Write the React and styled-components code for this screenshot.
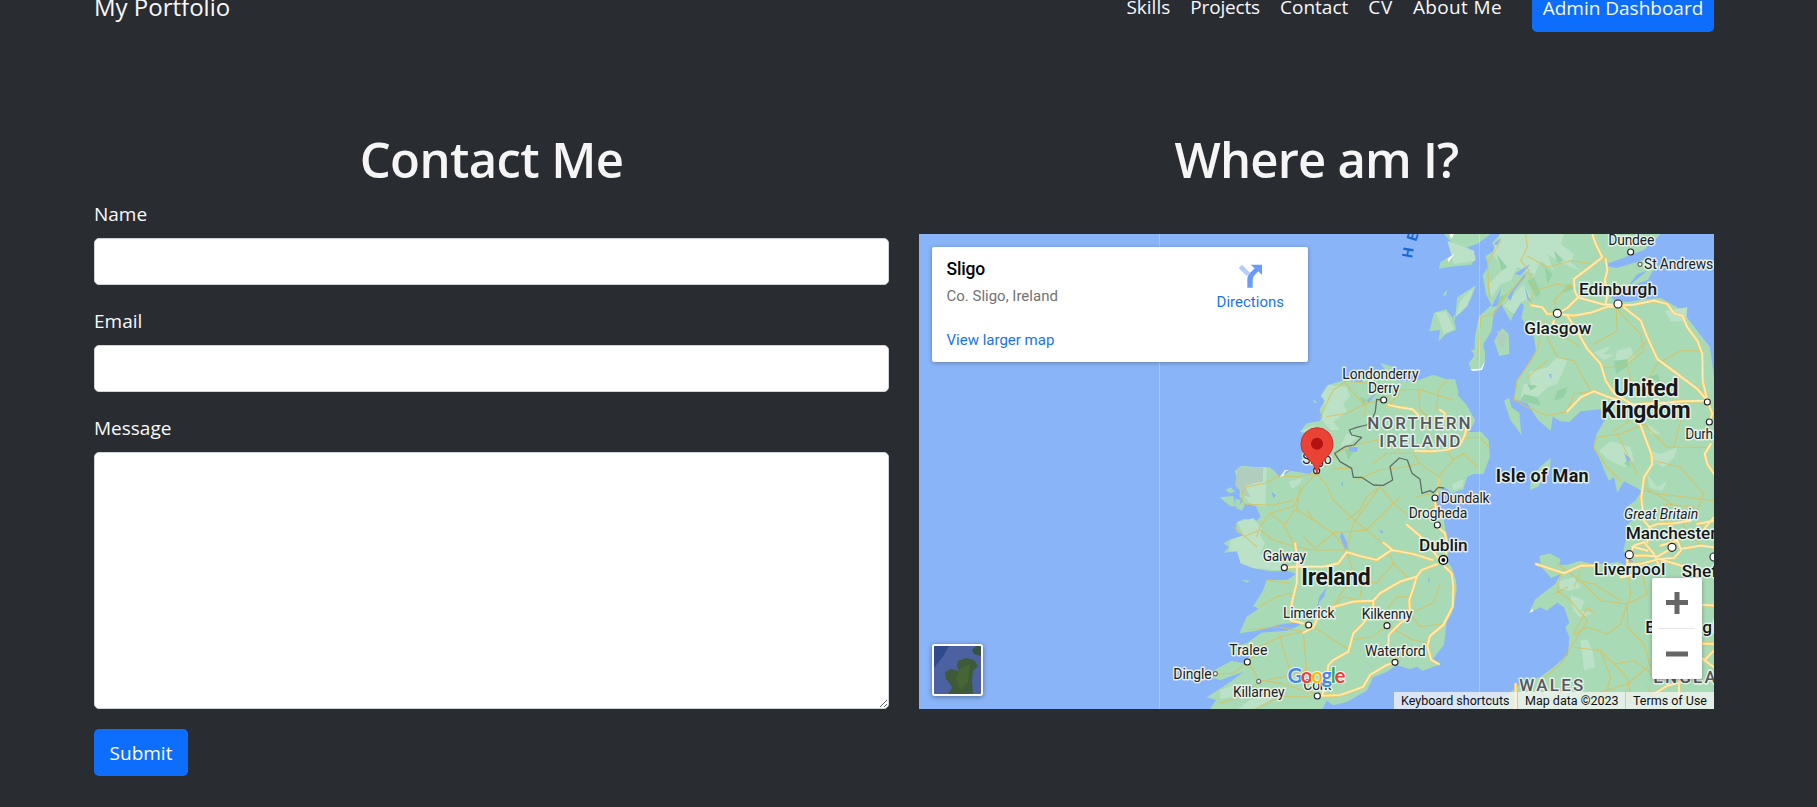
import React from "react";
import styled, { createGlobalStyle } from "styled-components";

const GlobalStyle = createGlobalStyle`
  * { box-sizing: border-box; }
  body {
    margin: 0;
    height: 807px;
    overflow: hidden;
    background: #292c31;
    color: #f8f9fa;
    font-family: "Open Sans", "Noto Sans", sans-serif;
    font-size: 19px;
    line-height: 30px;
  }
`;

const Page = styled.div`
  width: 1620px;
  margin-left: 94px;
`;

const Nav = styled.nav`
  display: flex;
  align-items: center;
  height: 47px;
  margin-top: -15px;
`;

const Brand = styled.a`
  font-size: 24px;
  margin: -4px auto 0 0;
`;

const NavLink = styled.a`
  padding: 0 10px;
  margin-top: -4px;
  letter-spacing: ${(p) => p.$spacing || 0}px;
`;

const AdminButton = styled.a`
  display: flex;
  align-items: center;
  justify-content: center;
  width: 182px;
  height: 47px;
  margin-left: 20px;
  padding-bottom: 2px;
  border-radius: 5px;
  background: #0d6efd;
`;

const Columns = styled.main`
  display: grid;
  grid-template-columns: 795px 795px;
  column-gap: 30px;
  padding-top: 98px;
`;

const Title = styled.h1`
  margin: 0;
  height: 60px;
  line-height: 59px;
  text-align: center;
  font-size: 49px;
  font-weight: 600;
  letter-spacing: ${(p) => p.$spacing}px;
  color: #f5f5f5;
`;

const Form = styled.form`
  display: flex;
  flex-direction: column;
  align-items: flex-start;
  padding-top: 8px;
`;

const Label = styled.label`
  height: 31px;
  line-height: 32px;
  margin-bottom: 9px;
`;

const Input = styled.input`
  width: 100%;
  height: 47px;
  margin-bottom: 20px;
  border: 1px solid #ced4da;
  border-radius: 5px;
  background: #fff;
`;

const TextArea = styled.textarea`
  width: 100%;
  height: 257px;
  margin-bottom: 20px;
  border: 1px solid #ced4da;
  border-radius: 5px;
  background: #fff;
`;

const Submit = styled.button`
  width: 94px;
  height: 47px;
  padding: 1px 0 0;
  border: 0;
  border-radius: 5px;
  background: #0d6efd;
  color: #fff;
  font: inherit;
`;

const MapFrame = styled.section`
  position: relative;
  height: 475px;
  margin-top: 44px;
  overflow: hidden;
  background: #8ab4f8;
  font-family: Roboto, sans-serif;
`;

const Chart = styled.svg`
  display: block;
`;

const PlaceCard = styled.div`
  position: absolute;
  left: 13px;
  top: 13px;
  width: 376px;
  height: 115px;
  padding: 10px 24px 0 14.5px;
  display: flex;
  justify-content: space-between;
  border-radius: 2px;
  background: #fff;
  box-shadow: 0 1px 4px rgba(0, 0, 0, 0.3);
`;

const PlaceName = styled.div`
  font-size: 17.5px;
  font-weight: 500;
  line-height: 24px;
  letter-spacing: -0.2px;
  color: #000;
`;

const PlaceAddress = styled.div`
  margin-top: 5px;
  font-size: 15px;
  line-height: 20px;
  color: #737373;
`;

const CardLink = styled.a`
  display: block;
  margin-top: ${(p) => p.$gap}px;
  font-size: 15px;
  line-height: 20px;
  color: #1a73e8;
`;

const Directions = styled.div`
  display: flex;
  flex-direction: column;
  align-items: center;
  padding-top: 6px;
`;

const Thumb = styled.div`
  position: absolute;
  left: 13px;
  top: 410px;
  width: 51px;
  height: 52px;
  border: 2px solid #fff;
  border-radius: 3px;
  overflow: hidden;
  box-shadow: 0 1px 5px rgba(0, 0, 0, 0.4);
`;

const ZoomBox = styled.div`
  position: absolute;
  left: 733px;
  top: 344px;
  width: 50px;
  height: 101px;
  border-radius: 2px;
  background: #fff;
  box-shadow: 0 1px 4px rgba(0, 0, 0, 0.3);
`;

const Terms = styled.div`
  position: absolute;
  right: 0;
  bottom: 0;
  display: flex;
  height: 17px;
  font-size: 12.5px;
  line-height: 17px;
  color: #111;
`;

const Term = styled.span`
  width: ${(p) => p.$width}px;
  padding-left: 7px;
  margin-left: ${(p) => (p.$first ? 0 : 1)}px;
  background: rgba(245, 245, 245, 0.74);
  white-space: nowrap;
`;

/* Coordinates below are in thirds of a pixel, in two sheets: west (Ireland) and east (Great Britain). */
const WEST = "translate(281 116) scale(0.33333)";
const EAST = "translate(495 0) scale(0.33333)";

const ireland =
  "M440,88 L405,98 382,106 362,138 374,152 358,180 366,200 358,214 320,220 300,246 330,252 342,262 346,352 330,372 272,362 240,382 226,366 210,352 165,352 125,347 104,362 110,385 122,402 118,440 130,452 108,474 126,482 136,462 168,468 182,500 170,512 130,506 108,520 110,545 130,556 92,568 70,580 86,590 72,608 110,604 122,640 160,655 210,664 262,662 288,672 262,690 200,690 188,724 160,768 176,776 140,800 118,850 170,842 236,824 296,816 300,826 262,842 184,848 140,880 90,892 94,915 150,918 128,940 95,932 40,962 0,976 62,990 130,965 92,995 20,1042 48,1050 28,1080 366,1080 380,1052 400,1066 440,1056 500,1022 520,982 560,966 590,945 630,958 650,950 668,962 718,944 700,925 732,884 740,815 756,790 770,720 768,690 754,650 738,628 748,602 740,560 732,512 704,475 706,440 735,412 756,430 790,418 802,380 822,372 850,372 870,320 866,270 844,246 806,246 826,212 800,165 772,134 776,128 765,88 740,88 700,74 650,92 590,92 604,78 578,50 540,38 556,60 520,76 490,80 486,98 Z";

const britain =
  "M258,0 L234,28 246,48 214,66 224,96 206,124 216,180 232,214 196,246 184,300 180,370 164,388 174,409 200,405 214,380 208,330 232,292 240,232 262,210 270,226 290,262 302,230 296,190 330,214 322,252 360,310 366,350 342,392 308,440 300,495 340,508 372,558 410,590 416,548 440,562 466,564 500,532 560,526 574,556 548,600 538,640 556,672 584,740 600,730 610,776 630,742 650,752 684,770 664,800 636,820 664,850 640,872 640,900 628,950 660,1006 612,984 540,992 500,980 460,992 436,992 440,976 408,958 376,966 382,1000 412,1032 440,1020 424,1050 384,1080 364,1096 346,1136 380,1120 398,1130 430,1106 450,1120 466,1166 454,1180 466,1210 462,1262 420,1298 380,1328 320,1350 270,1390 200,1428 L900,1428 900,430 888,340 862,306 800,226 740,192 700,194 640,204 600,200 590,184 640,160 702,138 716,112 740,98 700,74 608,102 568,94 690,48 740,0 Z";

const islands =
  "M120,60 L130,44 90,0 230,0 190,30 160,40 186,70 172,92 110,98 74,104 80,84Z M186,154 L170,196 140,236 118,246 126,288 96,300 74,322 78,288 46,292 60,236 96,226 122,260 130,190Z M264,282 L284,300 286,360 256,366 240,320Z M410,672 L408,706 372,758 348,768 350,744 376,700Z M270,500 L286,492 292,520 316,536 322,604 306,580 290,560Z M100,166 L96,186 86,184Z";

const westHills =
  "M386,105 L440,110 450,140 430,160 440,185 400,215 420,240 392,240 366,212 374,152 364,136Z M120,350 L200,352 196,470 150,460 125,430 150,440 110,400Z M112,515 L160,505 185,535 180,555 195,580 180,610 200,625 246,636 250,662 160,654 122,640 112,604 88,604 90,572 130,556Z M265,395 L306,384 300,400 276,416Z M756,402 L790,388 788,410 762,420Z M150,1050 L210,1030 220,1045 170,1075 110,1080Z M60,1020 L120,1000 104,1040 60,1046Z M300,244 L345,225 345,248Z M440,250 L475,260 450,280 420,292Z";
const eastHills =
  "M258,0 L450,0 440,30 480,60 470,86 500,110 450,90 400,60 420,110 380,80 350,150 360,120 310,100 290,140 260,150 232,190 224,150 262,112 250,80 234,60Z M100,20 L180,50 184,80 120,90Z M140,200 L180,160 160,216 124,250Z M66,236 L96,234 120,286 90,300Z M270,215 L300,180 330,150 350,190 322,205 300,240Z M345,414 L400,400 430,368 460,380 430,450 400,460 360,500 320,486 330,450 350,450Z M540,355 L590,335 570,360 600,362 570,380Z M610,350 L650,338 660,370 630,400 600,388Z M752,230 L820,220 816,262 770,262Z M556,650 L590,620 650,640 660,680 630,700 580,676Z M710,650 L740,660 790,640 780,670 750,700 720,684Z M432,1042 L480,1030 500,1060 470,1070 440,1066Z M470,1084 L512,1100 500,1130 540,1136 500,1152 478,1130Z M498,1220 L520,1216 536,1250 544,1300 510,1310 506,1270Z M700,720 L730,760 760,740 744,772 706,760Z M700,570 L740,600 710,600Z";
const greyHills =
  "M115,352 L190,352 188,395 160,400 134,408 152,442 130,436 105,405Z";
const darkHills =
  "M600,380 L640,376 642,396 606,420Z M330,480 L370,490 380,515 320,500Z M340,450 L370,456 350,470Z M700,430 L730,420 740,444Z M430,470 L460,460 450,490 420,500Z M360,130 L380,180 366,190 340,140Z M248,60 L280,100 262,110Z M392,100 L416,120 400,150Z M250,190 L280,180 250,220Z M630,690 L646,670 650,700Z M420,50 L450,80 430,86Z M460,150 L490,160 440,180Z";

const westMinor =
  "M350,371 L380,405 400,450 440,490 500,540 560,590 M350,371 L310,410 280,470 210,490 M350,371 L290,380 235,378 196,400 140,410 125,430 M125,430 L130,462 220,466 280,450 M210,490 L250,520 285,590 M300,410 L290,480 340,510 400,550 440,600 M285,480 L250,530 M340,510 L320,480 M400,354 L450,356 M374,352 L410,310 460,285 530,270 600,300 M362,200 L380,160 400,120 440,94 500,100 M380,200 L440,190 500,160 548,150 M430,90 L470,140 500,165 490,200 M548,150 L600,120 655,118 760,150 M655,118 L660,180 700,210 M710,180 L715,120 740,90 M560,170 L600,130 M540,410 L500,440 480,480 440,510 M540,410 L580,460 630,500 700,470 M470,390 L540,360 620,350 660,340 M600,440 L500,540 400,548 M285,590 L220,570 180,540 130,560 M285,590 L340,600 400,550 M440,600 L460,520 540,410 M440,600 L460,670 430,720 400,770 M560,590 L580,640 620,680 M440,600 L350,600 310,560 M200,690 L270,700 M180,770 L230,740 275,730 M310,845 L320,960 M310,845 L230,830 150,840 M310,845 L240,860 180,890 145,935 175,990 M145,935 L100,970 50,972 M175,990 L240,1000 340,1030 M340,830 L400,870 450,900 M320,960 L250,980 180,995 120,1040 60,1060 M560,826 L520,860 450,870 M560,826 L520,760 M560,826 L640,870 690,880 M640,740 L590,740 560,780 M720,700 L700,760 630,790 660,830 740,820 M400,770 L430,740 520,760 M585,930 L620,900 690,885 M715,380 L660,340 640,310 560,310 520,340 M715,380 L760,330 790,310 830,350 M790,265 L840,262 866,290 M760,330 L740,300 M240,860 L280,1000 M170,1075 L240,1040 330,1040 M580,640 L530,700 490,690 480,740 M210,490 L180,530 170,560 M100,530 L170,590 M650,440 L700,430";
const eastMinor =
  "M335,0 L340,40 320,80 345,110 310,150 280,180 240,240 200,250 190,380 M340,66 L400,100 470,80 540,90 570,70 M345,110 L360,170 350,200 M260,20 L220,90 226,190 M360,170 L430,150 480,160 M430,240 L420,200 470,150 M380,290 L370,350 310,440 300,500 M380,290 L440,300 500,340 M390,260 L400,310 430,370 480,380 530,470 M606,220 L610,290 540,330 M680,300 L640,260 606,220 M700,320 L620,400 570,400 M680,300 L690,350 640,390 650,440 M730,390 L800,350 866,350 M730,390 L700,440 640,480 M300,495 L340,520 400,545 460,532 M460,532 L480,480 540,470 M400,380 L340,430 M690,570 L620,600 550,610 540,640 580,700 620,740 M690,570 L760,640 880,640 M610,600 L640,660 670,720 M720,680 L800,700 870,780 840,850 M690,760 L760,800 820,850 M690,770 L740,780 900,800 M650,560 L600,590 M780,640 L800,560 M800,850 L820,900 860,930 M700,860 L760,810 840,820 M440,1020 L430,1070 470,1100 520,1160 M430,990 L500,1040 540,1050 620,1100 M500,1040 L560,1100 640,1110 700,1080 M640,1110 L640,1180 690,1230 710,1300 M640,1010 L650,1080 620,1170 580,1200 520,1180 480,1200 M520,1160 L470,1240 440,1290 380,1340 M480,1240 L560,1250 600,1290 660,1280 740,1340 M560,1250 L590,1330 560,1428 M600,1290 L640,1330 650,1400 M460,1060 L420,1080 M700,1080 L680,1000 M480,1060 L500,1010 M700,1300 L640,1350 540,1380 M380,1428 L440,1370 500,1360 M480,1200 L520,1120 540,1140 M740,1428 L700,1360";
const westMajor =
  "M565,165 L600,172 638,178 655,195 M720,180 L735,190 728,215 M645,302 L690,304 740,300 780,285 795,255 800,225 M705,455 L712,430 M708,500 L706,460 M712,530 L735,550 740,575 738,610 M620,524 L660,558 690,590 715,625 M250,652 L300,650 370,650 415,640 440,606 480,618 530,630 575,600 640,612 698,630 M550,578 L580,602 M285,580 L292,620 290,700 275,760 272,812 M390,774 L460,755 520,752 540,730 600,695 650,680 665,660 712,642 M650,680 L640,715 628,750 630,800 600,820 566,855 565,890 584,925 M520,752 L520,780 488,822 460,850 445,905 400,930 385,945 M355,800 L340,832 310,848 M310,820 L275,812 M734,650 L755,670 760,710 758,770 730,825 690,858 682,890 694,930 716,942 M360,1038 L420,1035 450,1025 490,1010 510,975 560,945 585,938 M385,945 L380,1000 366,1036";
const eastMajor =
  "M535,0 L545,30 565,70 520,105 480,135 482,170 492,190 M575,75 L580,110 572,140 580,180 575,210 M492,190 L570,212 612,212 M430,240 L462,220 492,190 M430,240 L480,245 530,236 580,218 612,218 M612,215 L660,212 720,200 760,210 780,238 805,245 820,280 850,320 865,360 866,440 880,500 M630,220 L680,260 700,310 730,375 790,420 850,465 880,500 M352,214 L385,220 400,240 430,240 M412,285 L420,260 M460,245 L500,310 520,345 560,390 575,440 600,478 660,515 M460,532 L500,490 540,472 580,488 620,500 M640,512 L760,506 800,502 880,500 M660,515 L680,575 712,660 715,690 690,730 682,790 690,860 706,880 M880,500 L895,540 885,565 M890,630 L872,660 880,690 900,720 M366,990 L450,1018 500,995 540,995 M646,965 L700,965 730,968 774,942 M646,965 L660,935 690,925 720,960 735,995 M655,938 L700,950 M706,880 L730,870 780,868 830,860 M706,880 L700,925 M640,965 L640,990 680,990 735,975 780,972 800,950 M740,935 L790,920 800,945 860,935 900,940 M820,1000 L735,975 M850,870 L900,860 M870,885 L900,850 M850,1112 L900,1114 M850,1228 L900,1230 M860,1270 L900,1300 M900,1250 L870,1280 M720,1380 L760,1355 800,1345 M795,1340 L795,1390 770,1428 M305,1350 L305,1428 M620,1030 L650,1024";
const border =
  "M548,150 L530,148 526,185 515,210 500,225 470,232 448,240 455,255 485,262 462,285 435,290 404,310 420,335 455,355 460,382 485,382 520,405 550,406 578,390 570,350 598,324 622,330 636,370 660,388 666,430 690,422 700,428 715,412 732,414";

const westDots = [
  [551, 150], [350, 362], [705, 444], [712, 525], [253, 653], [326, 825],
  [561, 827], [142, 936], [585, 937], [352, 1038], [176, 994, 6], [46, 971, 6],
];
const eastDots = [
  [650, 54], [678, 91, 6], [612, 210, 12], [430, 238, 12], [880, 504], [886, 564],
  [646, 962, 12], [774, 940, 12], [900, 969, 12],
];

const town = { size: 14, weight: 400, color: "#202124" };
const city = { size: 17.3, weight: 500, color: "#16181b" };
const country = { size: 23, weight: 700, color: "#16181b" };
const region = { size: 17, weight: 500, color: "#56585d" };

const westLabels = [
  ["Londonderry", 427, 88, 229, town],
  ["Derry", 504, 129, 94, town],
  ["Sligo", 307, 342, 88, town],
  ["Dundalk", 722, 459, 147, town],
  ["Drogheda", 626, 504, 176, town],
  ["Galway", 188, 633, 130, town],
  ["Limerick", 249, 804, 155, town],
  ["Kilkenny", 485, 807, 152, town],
  ["Tralee", 88, 915, 114, town],
  ["Waterford", 495, 918, 182, town],
  ["Dingle", -80, 986, 115, town],
  ["Killarney", 99, 1041, 155, town],
  ["Cork", 310, 1019, 84, town],
  ["Dublin", 657, 602, 146, city],
  ["Ireland", 304, 704, 208, country],
  ["NORTHERN", 502, 237, 310, region],
  ["IRELAND", 538, 290, 243, region],
];
const eastLabels = [
  ["Dundee", 583, 33, 138, town],
  ["St Andrews", 690, 106, 208, town],
  ["Durham", 814, 615, 141, town],
  ["Edinburgh", 495, 183, 234, city],
  ["Glasgow", 331, 299, 201, city],
  ["Isle of Man", 245, 743, 279, { size: 18, weight: 700, color: "#16181b" }],
  ["Liverpool", 540, 1022, 214, city],
  ["Manchester", 635, 915, 272, city],
  ["Sheffield", 803, 1029, 206, city],
  ["Birmingham", 694, 1197, 312, city],
  ["Great Britain", 630, 854, 223, { ...town, italic: true }],
  ["United", 599, 486, 194, country],
  ["Kingdom", 562, 553, 268, country],
  ["WALES", 316, 1371, 192, region],
  ["ENGLAND", 718, 1346, 270, region],
];

function Labels({ items, left, top }) {
  return items.map(([text, x, y, width, kind]) => (
    <text
      key={text}
      x={left + x / 3}
      y={top + y / 3}
      textLength={width / 3}
      fontSize={kind.size}
      fontWeight={kind.weight}
      fontStyle={kind.italic ? "italic" : "normal"}
      fill={kind.color}
      stroke="#eef7f2"
      strokeOpacity="0.9"
      strokeWidth="2.8"
      strokeLinejoin="round"
      paintOrder="stroke"
    >
      {text}
    </text>
  ));
}

function Roads({ minor, major }) {
  return (
    <g fill="none" strokeLinejoin="round" strokeLinecap="round">
      <path d={minor} stroke="#dcc05c" strokeOpacity="0.85" strokeWidth="3.2" />
      <path d={major} stroke="#f7cb66" strokeWidth="9" />
      <path d={major} stroke="#ffecb8" strokeWidth="5" />
    </g>
  );
}

function Dots({ items }) {
  return items.map(([x, y, r = 9]) => (
    <circle key={`${x}-${y}`} cx={x} cy={y} r={r} fill="#fff" stroke={r === 6 ? "#666" : "#222"} strokeWidth={3.4} />
  ));
}

function MapDrawing() {
  return (
    <Chart width="795" height="475" viewBox="0 0 795 475">
      <g transform={WEST}>
        <path d={ireland} fill="#a8dab5" />
        <path d="M76,420 L92,412 106,425 90,430Z M58,442 L100,438 106,470 90,468Z M106,446 L122,450 116,474 106,468Z M340,146 L350,158 342,158Z M125,690 L150,692 140,698Z M812,0 L856,0 850,50 812,58 808,36 825,16Z" fill="#a8dab5" />
        <path d={westHills} fill="#bbe2c6" />
        <path d={greyHills} fill="#b0cdbd" />
        <path d="M435,300 L470,290 445,330Z M480,140 L500,150 490,170Z" fill="#94d2a5" />
        <path d="M446,290 L474,292 470,306 448,304Z M426,545 L440,575 446,600 434,596 420,560Z M380,712 L372,740 356,758 362,780 350,776 358,740Z M214,425 L228,436 220,445Z M424,396 L430,400 426,412Z M536,538 L550,545 546,552Z M684,688 L690,680 686,700Z M500,150 L530,130 505,160Z" fill="#8ab4f8" />
        <Roads minor={westMinor} major={westMajor} />
        <path d="M715,420 L716,385" fill="none" stroke="#f7cb66" strokeWidth="6" />
        <path d={border} fill="none" stroke="#5f6d68" strokeWidth="3.8" strokeLinejoin="round" />
        <path d="M240,380 L255,360 268,360 256,364 250,378Z" fill="#fff" />
      </g>
      <g transform={EAST}>
        <path d={britain} fill="#a8dab5" />
        <path d={islands} fill="#a8dab5" />
        <path d={eastHills} fill="#bbe2c6" />
        <path d={darkHills} fill="#94d2a5" />
        <path d="M250,290 L274,300 270,342 252,330Z" fill="#b0cdbd" />
        <path d="M280,190 L330,120 336,126 300,170 290,200Z M232,220 L262,160 250,216Z M330,150 L344,190 354,208 340,196Z M240,30 L262,10 250,34Z M404,420 L412,420 412,436Z M630,656 L650,676 640,684Z M640,160 L700,110 670,120Z M300,120 L350,90 320,124Z M640,966 L660,985 640,990Z" fill="#8ab4f8" />
        <path d="M100,75 L122,58 104,84Z M170,406 L200,404 214,380 204,408 176,411Z M346,1136 L354,1124 358,1132Z M106,0 L120,0 112,14Z" fill="#fff" />
        <Roads minor={eastMinor} major={eastMajor} />
      </g>
      <path d="M240.5,0V475M560.5,0V475" stroke="#fff" strokeOpacity="0.25" />
      <g transform={WEST}><Dots items={westDots} /></g>
      <g transform={EAST}><Dots items={eastDots} /></g>
      <g transform={WEST}>
        <circle cx="730" cy="630" r="13" fill="#fff" stroke="#000" strokeWidth="4" />
        <circle cx="730" cy="630" r="6" fill="#000" />
      </g>
      <Labels items={westLabels} left={281} top={116} />
      <Labels items={eastLabels} left={495} top={0} />
      <g fill="#1967d2" fontSize="14.5" fontWeight="700">
        <text transform="translate(493 24.5) rotate(-80)">H</text>
        <text transform="translate(497 8) rotate(-72)">E</text>
      </g>
      <g transform={WEST}>
        <path d="M351,372 C346,346 332,335 316,315 C306,303 303,294 303,281 A48,48 0 0 1 399,281 C399,294 396,303 386,315 C370,335 356,346 351,372Z" fill="#ea4335" stroke="#c5221f" strokeWidth="2.5" />
        <circle cx="351" cy="281" r="18" fill="#b31412" />
      </g>
      <text x="368.5" y="448.5" textLength="58" fontFamily="Lato, sans-serif" fontSize="20.5" fontWeight="700" stroke="#fff" strokeOpacity="0.8" strokeWidth="2" paintOrder="stroke">
        <tspan fill="#4285f4">G</tspan><tspan fill="#ea4335">o</tspan><tspan fill="#fbbc04">o</tspan><tspan fill="#4285f4">g</tspan><tspan fill="#34a853">l</tspan><tspan fill="#ea4335">e</tspan>
      </text>
    </Chart>
  );
}

function DirectionsIcon() {
  return (
    <svg width="25" height="26" viewBox="986 112 75 78">
      <path d="M998,117 L988,127 1012,151 1022,141Z" fill="#b3cdfd" />
      <path d="M1024,117 L1058,117 1058,148 1047,137 1036,148 Q1030,154 1030,162 L1030,186 1014,186 1014,160 Q1014,150 1021,143 L1036,128Z" fill="#6a9bfb" />
    </svg>
  );
}

function SatelliteThumb() {
  return (
    <Thumb>
      <svg width="47" height="48" viewBox="0 0 47 48">
        <rect width="47" height="48" fill="#4c62a0" />
        <path d="M0,0H15L8,12 0,22Z" fill="#2f4b8c" />
        <path d="M47,0V10L40,8 38,4 42,0Z" fill="#36533f" />
        <path d="M24,15 L32,12 40,14 44,20 39,25 38,34 39,48 14,48 18,42 16,38 12,33 11,26 17,23 25,25 23,20Z" fill="#3e5a38" />
        <path d="M26,22 L36,18 34,36 26,44 22,32Z" fill="#456634" />
      </svg>
    </Thumb>
  );
}

export default function App() {
  return (
    <>
      <GlobalStyle />
      <Page>
        <Nav>
          <Brand>My Portfolio</Brand>
          <NavLink>Skills</NavLink>
          <NavLink $spacing={-0.16}>Projects</NavLink>
          <NavLink>Contact</NavLink>
          <NavLink $spacing={0.7}>CV</NavLink>
          <NavLink $spacing={0.35}>About Me</NavLink>
          <AdminButton>Admin Dashboard</AdminButton>
        </Nav>
        <Columns>
          <section>
            <Title $spacing={-0.6}>Contact Me</Title>
            <Form>
              <Label>Name</Label>
              <Input />
              <Label>Email</Label>
              <Input />
              <Label>Message</Label>
              <TextArea />
              <Submit type="button">Submit</Submit>
            </Form>
          </section>
          <section>
            <Title $spacing={-0.8}>Where am I?</Title>
            <MapFrame>
              <MapDrawing />
              <PlaceCard>
                <div>
                  <PlaceName>Sligo</PlaceName>
                  <PlaceAddress>Co. Sligo, Ireland</PlaceAddress>
                  <CardLink $gap={24}>View larger map</CardLink>
                </div>
                <Directions>
                  <DirectionsIcon />
                  <CardLink $gap={3}>Directions</CardLink>
                </Directions>
              </PlaceCard>
              <SatelliteThumb />
              <ZoomBox>
                <svg width="50" height="101" viewBox="0 0 50 101">
                  <path d="M14,24.5H36M25,14V36M14,76H36" stroke="#666" strokeWidth="5" />
                  <path d="M6,50.5H43" stroke="#e6e6e6" />
                </svg>
              </ZoomBox>
              <Terms>
                <Term $width={123} $first>Keyboard shortcuts</Term>
                <Term $width={107}>Map data ©2023</Term>
                <Term $width={88}>Terms of Use</Term>
              </Terms>
            </MapFrame>
          </section>
        </Columns>
      </Page>
    </>
  );
}
